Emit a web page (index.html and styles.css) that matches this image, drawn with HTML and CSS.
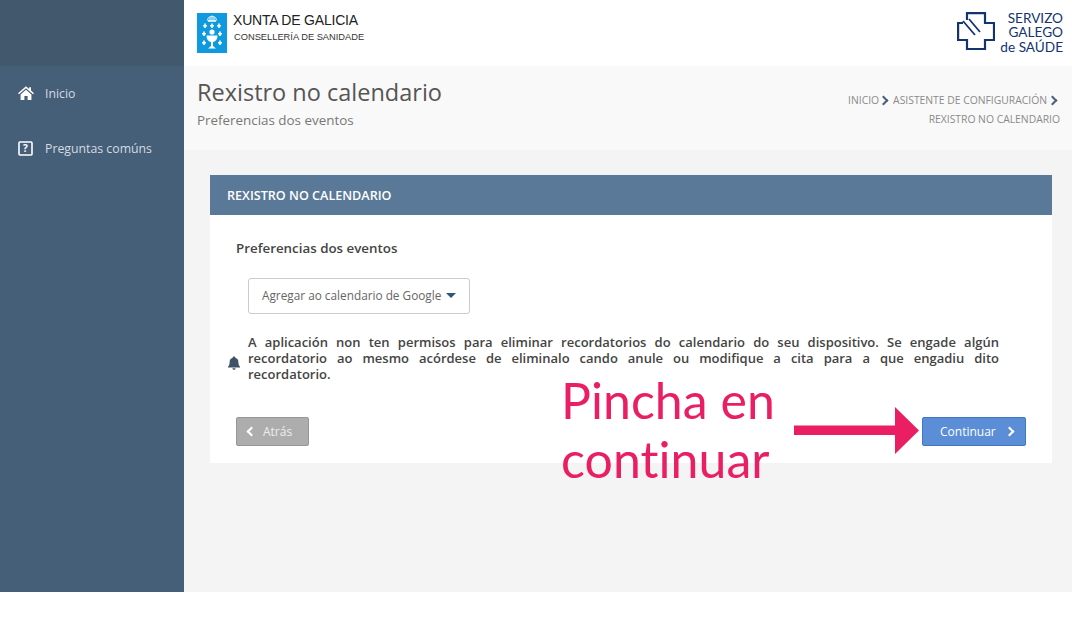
FILE: index.html
```html
<!DOCTYPE html>
<html lang="gl">
<head>
<meta charset="utf-8">
<title>Rexistro no calendario</title>
<link rel="stylesheet" href="styles.css">
</head>
<body>
<div class="app">
  <aside class="sidebar">
    <div class="side-top"></div>
    <nav class="side-nav">
      <a class="side-item">
        <svg class="side-icon" viewBox="0 0 16 14" width="16" height="14"><path fill="#fff" d="M8 0.2 L11.2 3 V1.2 H13 V4.6 L16 7.2 L15 8.2 L8 2.2 L1 8.2 L0 7.2 Z M2.6 8.4 L8 3.7 L13.4 8.4 V14 H9.6 V10 H6.4 V14 H2.6 Z"/></svg>
        <span>Inicio</span>
      </a>
      <a class="side-item">
        <svg class="side-icon" viewBox="0 0 16 15" width="16" height="15"><rect x="1" y="1" width="13" height="13" rx="1" fill="none" stroke="#fff" stroke-width="1.6"/><text x="7.5" y="11" text-anchor="middle" class="q-mark">?</text></svg>
        <span>Preguntas comúns</span>
      </a>
    </nav>
  </aside>
  <div class="main">
    <header class="topbar">
      <div class="xunta">
        <svg class="xunta-shield" viewBox="0 0 30 40" width="30" height="40">
          <rect width="30" height="40" fill="#0f9ae0"/>
          <path fill="none" stroke="#fff" stroke-width="1" d="M11 8 C10 4 13 4 15 3 C17 4 20 4 19 8 Z M11 8 H19 M13 4 V8 M15 3 V8 M17 4 V8"/>
          <g fill="#fff">
            <path d="M6 12 h1.2 v-1.6 h1.6 v1.6 h1.2 v1.4 h-1.2 v1.6 h-1.6 v-1.6 h-1.2 Z"/>
            <path d="M13 12 h1.2 v-1.6 h1.6 v1.6 h1.2 v1.4 h-1.2 v1.6 h-1.6 v-1.6 h-1.2 Z"/>
            <path d="M20 12 h1.2 v-1.6 h1.6 v1.6 h1.2 v1.4 h-1.2 v1.6 h-1.6 v-1.6 h-1.2 Z"/>
            <path d="M5 20 h1.2 v-1.6 h1.6 v1.6 h1.2 v1.4 h-1.2 v1.6 h-1.6 v-1.6 h-1.2 Z"/>
            <path d="M21 20 h1.2 v-1.6 h1.6 v1.6 h1.2 v1.4 h-1.2 v1.6 h-1.6 v-1.6 h-1.2 Z"/>
            <path d="M5 29 h1.2 v-1.6 h1.6 v1.6 h1.2 v1.4 h-1.2 v1.6 h-1.6 v-1.6 h-1.2 Z"/>
            <path d="M21 29 h1.2 v-1.6 h1.6 v1.6 h1.2 v1.4 h-1.2 v1.6 h-1.6 v-1.6 h-1.2 Z"/>
            <circle cx="15" cy="19" r="2.6"/>
            <path d="M9.500 22.500 H20.500 C20.500 27 18 28.500 16 29 V33 L19 35.500 H11 L14 33 V29 C12 28.500 9.500 27 9.500 22.500 Z"/>
          </g>
        </svg>
        <div class="xunta-text">
          <div class="xunta-name">XUNTA DE GALICIA</div>
          <div class="xunta-dept">CONSELLERÍA DE SANIDADE</div>
        </div>
      </div>
      <div class="sergas">
        <svg class="sergas-cross" viewBox="0 0 38 38" width="38" height="38">
          <path fill="none" stroke="#12356f" stroke-width="2.200" d="M10 8 V1.100 H28 V11 H37 V28 H28 V37 H10 V28 H1.100 V11 H6"/>
          <path fill="none" stroke="#12356f" stroke-width="1.800" d="M6 9 L18 23 M12 7 L23 20"/>
        </svg>
        <div class="sergas-text">SERVIZO<br>GALEGO<br>de SAÚDE</div>
      </div>
    </header>
    <section class="titlebar">
      <div class="titles">
        <h1 class="page-title">Rexistro no calendario</h1>
        <p class="page-sub">Preferencias dos eventos</p>
      </div>
      <div class="crumbs">
        <div class="crumb-line"><span>INICIO</span><span class="chev"></span><span>ASISTENTE DE CONFIGURACIÓN</span><span class="chev chev-end"></span></div>
        <div class="crumb-line">REXISTRO NO CALENDARIO</div>
      </div>
    </section>
    <section class="content">
      <div class="card">
        <h2 class="card-head">REXISTRO NO CALENDARIO</h2>
        <div class="card-body">
          <h3 class="pref-label">Preferencias dos eventos</h3>
          <div class="select">Agregar ao calendario de Google <span class="caret"></span></div>
          <div class="notice">
            <svg class="bell" viewBox="0 0 14 14" width="14" height="14"><path fill="#3d5266" d="M7 0.500 C8 0.500 8.300 1.200 8.300 1.800 C10.400 2.400 11.400 4 11.400 6.200 C11.400 8.600 12 9.600 13 10.600 V11.400 H1 V10.600 C2 9.600 2.600 8.600 2.600 6.200 C2.600 4 3.600 2.400 5.700 1.800 C5.700 1.200 6 0.500 7 0.500 Z M5.400 12.200 H8.600 C8.500 13.200 7.800 13.800 7 13.800 C6.200 13.800 5.500 13.200 5.400 12.200 Z"/></svg>
            <p class="notice-text">A aplicación non ten permisos para eliminar recordatorios do calendario do seu dispositivo. Se engade algún recordatorio ao mesmo acórdese de eliminalo cando anule ou modifique a cita para a que engadiu dito recordatorio.</p>
          </div>
          <div class="actions">
            <button class="btn btn-back"><span class="btn-chev btn-chev-left"></span>Atrás</button>
            <button class="btn btn-next">Continuar<span class="btn-chev btn-chev-right"></span></button>
          </div>
        </div>
      </div>
    </section>
  </div>
  <div class="callout">Pincha en<br>continuar</div>
  <svg class="arrow" viewBox="0 0 125 48" width="125" height="48"><path fill="#e91e63" d="M0 18.500 H101 V0 L125 23.500 L101 47 V28 H0 Z"/></svg>
</div>
</body>
</html>
```
FILE: styles.css
```css
* { box-sizing: border-box; }
html, body { margin: 0; padding: 0; background: #fff; }
body { font-family: "Open Sans", sans-serif; color: #444; }
.app { position: relative; display: flex; height: 592px; width: 1072px; }

.sidebar { width: 184px; flex: none; background: #465f78; display: flex; flex-direction: column; }
.side-top { height: 66px; background: #42586c; }
.side-nav { display: flex; flex-direction: column; }
.side-item { display: flex; align-items: center; height: 55px; padding: 0 0 1px 18px; color: #d3dae1; font-size: 12.300px; gap: 11px; }
.side-icon { flex: none; }
.q-mark { font-family: "Open Sans", sans-serif; font-size: 10px; font-weight: 700; fill: #fff; }

.main { flex: 1; display: flex; flex-direction: column; min-width: 0; background: #f4f4f4; }
.topbar { height: 66px; background: #fff; display: flex; justify-content: space-between; align-items: center; padding: 0 9px 0 13px; }
.xunta { display: flex; align-items: flex-start; gap: 6px; }
.xunta-shield { display: block; }
.xunta-text { color: #222; font-family: "Liberation Sans", sans-serif; margin-top: -1px; }
.xunta-name { font-size: 14px; line-height: 17px; letter-spacing: -0.2px; }
.xunta-dept { font-size: 9.300px; line-height: 14px; margin: 1px 0 0 1px; color: #333; }
.sergas { display: flex; align-items: flex-start; gap: 5px; }
.sergas-cross { display: block; }
.sergas-text { font-family: "Lato", sans-serif; font-size: 13.600px; line-height: 14.500px; text-align: right; color: #12356f; margin-top: -1px; }

.titlebar { height: 84px; background: #f9f9f9; display: flex; justify-content: space-between; padding: 0 12px 0 13px; }
.page-title { margin: 10px 0 0; font-size: 23.500px; line-height: 33px; font-weight: 400; color: #555; }
.page-sub { margin: 2px 0 0; font-size: 13.400px; line-height: 19px; color: #777; }
.crumbs { font-size: 10.350px; color: #8a8a8a; padding-top: 25px; }
.crumb-line { line-height: 19px; display: flex; justify-content: flex-end; align-items: center; white-space: nowrap; }
.chev { display: block; flex: none; width: 7px; height: 7px; border-top: 2px solid #4a6078; border-right: 2px solid #4a6078; transform: rotate(45deg); margin: 0 6px 0 1px; }
.chev-end { margin: 0 4px 0 2px; }

.content { flex: 1; padding: 25px 20px 0 26px; }
.card { background: #fff; height: 288px; display: flex; flex-direction: column; }
.card-head { margin: 0; height: 40px; background: #5a7897; color: #fff; font-size: 12.600px; font-weight: 600; line-height: 41px; padding-left: 17px; }
.card-body { flex: 1; padding: 24px 26px 0 17px; display: flex; flex-direction: column; }
.pref-label { margin: 0 0 0 9px; font-size: 13.350px; line-height: 19px; font-weight: 600; color: #444; }
.select { margin: 20px 0 0 21px; width: 222px; height: 36px; border: 1px solid #ccc; border-radius: 3px; background: #fff; font-size: 11.800px; color: #666; line-height: 33px; padding-left: 13px; white-space: nowrap; }
.caret { display: inline-block; width: 0; height: 0; border-left: 5px solid transparent; border-right: 5px solid transparent; border-top: 5px solid #2f5578; margin-left: 2px; vertical-align: 2px; }
.notice { display: flex; align-items: center; margin-top: 20px; }
.bell { flex: none; margin-top: 9px; margin-right: 7px; }
.notice-text { margin: 0; width: 751px; font-size: 13px; line-height: 16px; font-weight: 600; color: #444; text-align: justify; word-spacing: 1.500px; }
.actions { display: flex; justify-content: space-between; margin: 35px 0 0 9px; }
.btn { font-family: "Open Sans", sans-serif; font-size: 12px; height: 29px; border-radius: 2px; display: flex; align-items: center; padding: 0; }
.btn-back { width: 73px; background: #adadad; border: 1px solid #979797; color: #eee; padding-left: 11px; }
.btn-next { width: 104px; background: #5b8ed6; border: 1px solid #3f77c5; color: #fff; padding-left: 17px; }
.btn-chev { display: block; flex: none; width: 7px; height: 7px; border-top: 2px solid #fff; border-right: 2px solid #fff; }
.btn-chev-left { transform: rotate(-135deg); margin-right: 8px; }
.btn-chev-right { transform: rotate(45deg); margin-left: 10px; }

.callout { position: absolute; left: 561px; top: 371px; font-family: "Lato", sans-serif; font-size: 50px; line-height: 59px; letter-spacing: 0.050px; color: #e91e63; }
.arrow { position: absolute; left: 794px; top: 407px; }
```
